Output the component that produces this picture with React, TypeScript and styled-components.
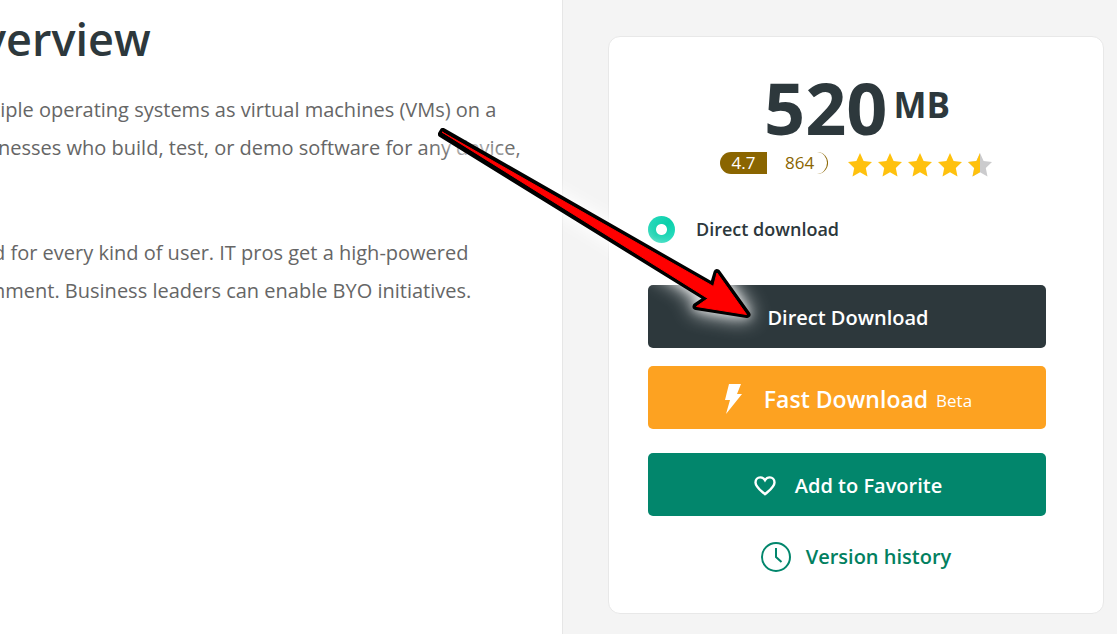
import React from "react";
import styled, { createGlobalStyle } from "styled-components";

const GlobalStyle = createGlobalStyle`
  *, *::before, *::after { box-sizing: border-box; }
  body {
    margin: 0;
    background: #fff;
    color: #2d383c;
    font-family: "Open Sans", "Noto Sans", sans-serif;
  }
`;

const Page = styled.div`
  position: relative;
  display: grid;
  grid-template-columns: minmax(0, 562fr) minmax(0, 555fr);
  min-height: 100vh;
  overflow: hidden;
`;

const Article = styled.main`
  overflow: hidden;
  padding-top: 8px;
`;

const ArticleBody = styled.div`
  margin-left: -7px;
  white-space: nowrap;
`;

const Heading = styled.h1`
  margin: 0 0 21px -11px;
  font-size: 45px;
  line-height: 62px;
  font-weight: 600;
`;

const Paragraph = styled.p`
  margin: 0 0 67px;
  font-size: 20px;
  line-height: 38px;
  color: #666;
`;

const Sidebar = styled.aside`
  padding: 36px 13px 20px 45px;
  background: #f4f4f4;
  border-left: 1px solid #e6e6e6;
`;

const Card = styled.section`
  display: flex;
  flex-direction: column;
  padding: 30px 57px 40px 39px;
  background: #fff;
  border: 1px solid #e8e8e8;
  border-radius: 12px;
`;

const Size = styled.div`
  display: flex;
  justify-content: center;
  align-items: flex-start;
  gap: 6px;
  height: 82px;
  padding-left: 20px;
  font-size: 72px;
  line-height: 80px;
  font-weight: 700;
`;

const Unit = styled.span`
  font-size: 35px;
  line-height: 76px;
`;

const Rating = styled.div`
  display: flex;
  justify-content: center;
  align-items: center;
  height: 28px;
  margin: 0 0 36px 18px;
  font-size: 17px;
  line-height: 22px;
`;

const Score = styled.span`
  width: 47px;
  border-radius: 11px 0 0 11px;
  background: #8a6500;
  color: #fff;
  text-align: center;
`;

const Votes = styled.span`
  width: 61px;
  height: 22px;
  margin-right: 20px;
  padding-left: 18px;
  border-right: 1px solid #8a6500;
  border-radius: 0 11px 11px 0;
  color: #8a6500;
`;

const Stars = styled.div`
  display: flex;
  gap: 6px;
  padding-top: 4px;
`;

const Option = styled.label`
  display: flex;
  align-items: center;
  gap: 21px;
  height: 32px;
  margin-bottom: 40px;
  font-size: 18px;
  line-height: 32px;
  font-weight: 600;
`;

const Radio = styled.input`
  appearance: none;
  width: 27px;
  height: 27px;
  margin: 0;
  border-radius: 50%;
  background: radial-gradient(circle, #fff 5px, transparent 6px),
    linear-gradient(135deg, #2bdcc0, #0ccfaa 50%, #2ce0c4);
`;

const Button = styled.button<{ $color: string; $gap: number; $size: number }>`
  display: flex;
  flex: none;
  align-items: center;
  justify-content: center;
  height: 63px;
  margin: 0 0 ${(p) => p.$gap}px;
  padding: 2px 0 0 2px;
  border: 0;
  border-radius: 5px;
  background: ${(p) => p.$color};
  color: #fff;
  font: 600 ${(p) => p.$size}px/32px "Open Sans", "Noto Sans", sans-serif;
`;

const Beta = styled.small`
  margin: 4px 0 0 8px;
  font-size: 17px;
  font-weight: 400;
`;

const Icon = styled.svg<{ $space: number }>`
  flex: none;
  margin-right: ${(p) => p.$space}px;
`;

const History = styled.a`
  display: flex;
  justify-content: center;
  align-items: center;
  padding-left: 18px;
  color: #02805f;
  font-size: 20px;
  line-height: 32px;
  font-weight: 600;
  text-decoration: none;
`;

const Arrow = styled.svg`
  position: absolute;
  left: 0;
  top: 0;
  overflow: visible;
  pointer-events: none;
  filter: drop-shadow(0 0 5px rgba(255, 255, 255, 0.5)) drop-shadow(0 0 10px #fff);
`;

const starPath = "M12 0 L15.6 8 L24 9 L17.8 15 L19.5 23.5 L12 19.2 L4.5 23.5 L6.2 15 L0 9 L8.4 8 Z";

const Star = ({ half = false }: { half?: boolean }) => (
  <svg width="24" height="24" viewBox="0 0 24 24" aria-hidden="true">
    <path d={starPath} fill={half ? "#cbcbcd" : "#ffc10d"} />
    {half && <path d="M12 0 L12 19.2 L4.5 23.5 L6.2 15 L0 9 L8.4 8 Z" fill="#ffc10d" />}
  </svg>
);

export default function App() {
  return (
    <>
      <GlobalStyle />
      <Page>
        <Article>
          <ArticleBody>
            <Heading>verview</Heading>
            <Paragraph>
              tiple operating systems as virtual machines (VMs) on a<br />
              inesses who build, test, or demo software for any device,
            </Paragraph>
            <Paragraph>
              d for every kind of user. IT pros get a high-powered<br />
              nment. Business leaders can enable BYO initiatives.
            </Paragraph>
          </ArticleBody>
        </Article>
        <Sidebar>
          <Card>
            <Size>520<Unit>MB</Unit></Size>
            <Rating>
              <Score>4.7</Score>
              <Votes>864</Votes>
              <Stars role="img" aria-label="4.5 stars">
                <Star /><Star /><Star /><Star /><Star half />
              </Stars>
            </Rating>
            <Option>
              <Radio type="radio" name="method" defaultChecked />
              Direct download
            </Option>
            <Button $color="#2d383c" $gap={18} $size={20}>Direct Download</Button>
            <Button $color="#fda221" $gap={24} $size={23}>
              <Icon $space={22} width="18" height="30" viewBox="0 0 18 30" aria-hidden="true">
                <path d="M5 0H17L13 10H18L2 30L6 16H1Z" fill="#fff" />
              </Icon>
              Fast Download<Beta>Beta</Beta>
            </Button>
            <Button $color="#02866c" $gap={25} $size={20}>
              <Icon $space={19} width="22" height="20" viewBox="0 0 22 20" aria-hidden="true">
                <path d="M11 18.2C7 14.6 1.5 11 1.5 6.4C1.5 3.4 3.6 1.4 6.2 1.4C8.2 1.4 9.9 2.4 11 4.2C12.1 2.4 13.8 1.4 15.8 1.4C18.4 1.4 20.5 3.4 20.5 6.4C20.5 11 15 14.6 11 18.2Z" fill="none" stroke="#fff" strokeWidth="2.4" />
              </Icon>
              Add to Favorite
            </Button>
            <History href="#history">
              <Icon $space={15} width="30" height="30" viewBox="0 0 30 30" aria-hidden="true">
                <g fill="none" stroke="#02866c" strokeWidth="2">
                  <circle cx="15" cy="15" r="14" />
                  <path d="M15 6V15L20.5 20" />
                </g>
              </Icon>
              Version history
            </History>
          </Card>
        </Sidebar>
        <Arrow width="760" height="330" viewBox="0 0 760 330" aria-hidden="true">
          <path d="M443 131.5L713 286L717 272.5L747 314.5L696 306.5L708 298.5L441.5 134Z" stroke="#000" strokeWidth="7" strokeLinejoin="round" />
          <path d="M442 132L713.5 286.5L717 273L746.5 314.5L696.5 306.5L708 298.5Z" fill="#f00" stroke="#f00" strokeWidth="1" strokeLinejoin="round" />
        </Arrow>
      </Page>
    </>
  );
}
